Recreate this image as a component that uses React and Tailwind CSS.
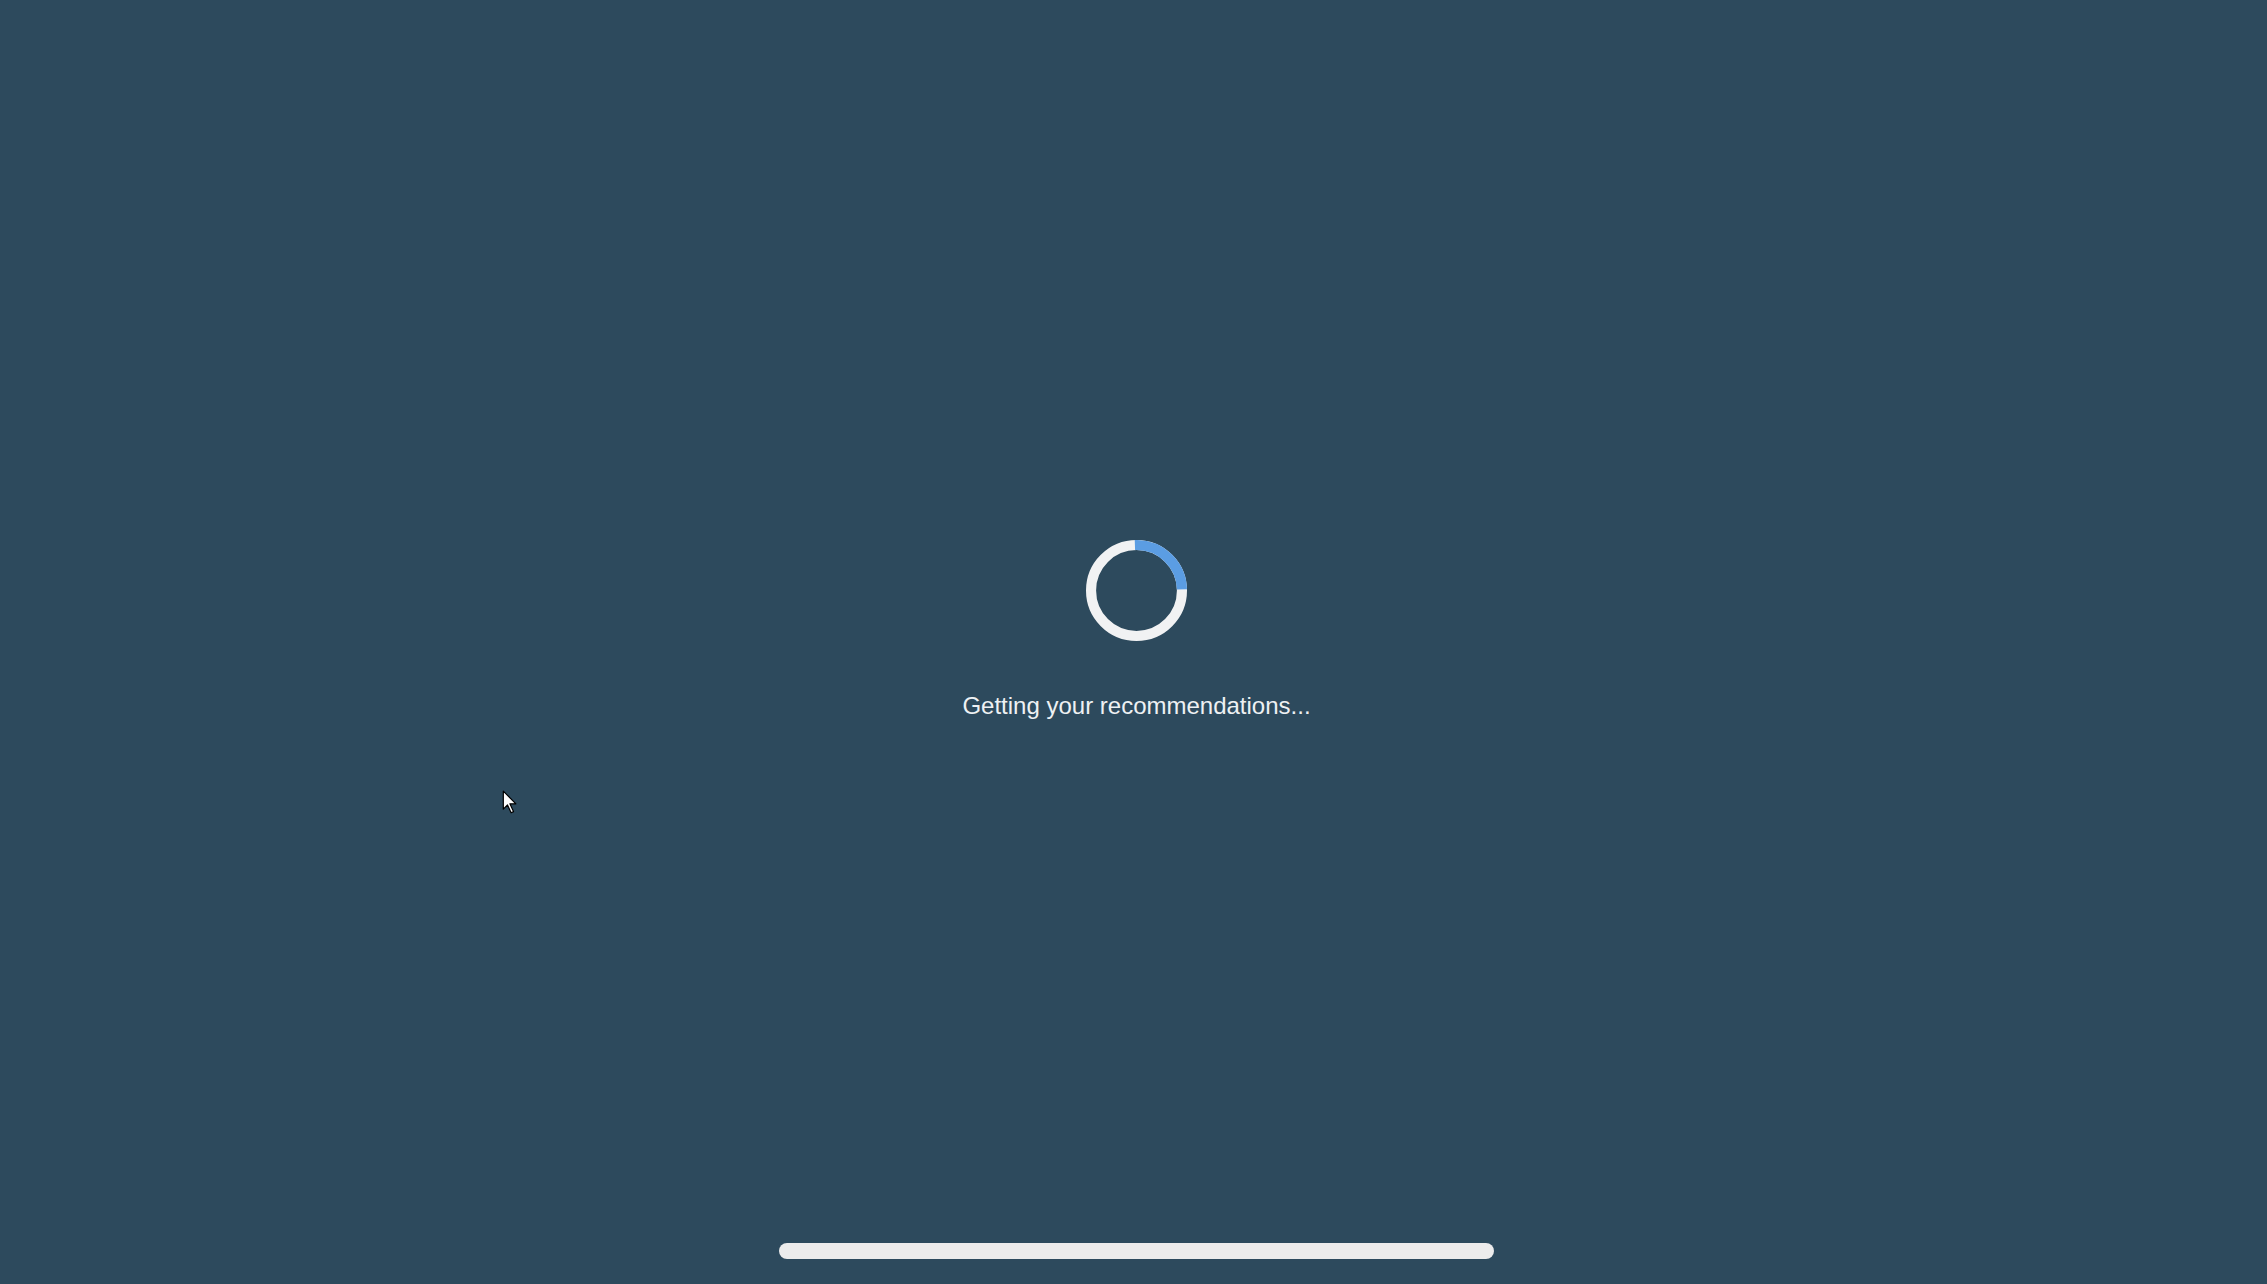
export default function App() {
  return (
    <main
      className="relative flex h-[1284px] w-full flex-col items-center overflow-hidden bg-[#2d4a5d] pl-[6px]"
      style={{ fontFamily: '"Liberation Sans", Arial, sans-serif' }}
    >
      {/* spinner */}
      <div className="mt-[540px] h-[101px] w-[101px]">
        <svg viewBox="0 0 100 100" className="h-full w-full">
          <circle cx="50" cy="50" r="45" fill="none" stroke="#f1f2f3" strokeWidth="10" />
          <circle
            cx="50"
            cy="50"
            r="45"
            fill="none"
            stroke="#5b9de3"
            strokeWidth="10"
            strokeDasharray="71 283"
            transform="rotate(-92 50 50)"
          />
        </svg>
      </div>

      <p className="mt-[51px] text-[24px] leading-[28px] text-[#eef1f3]">Getting your recommendations...</p>

      {/* home indicator */}
      <div className="mt-auto mb-[25px] h-[16px] w-[715px] rounded-full bg-[#ececec]" />

      {/* mouse pointer */}
      <svg className="absolute left-[502px] top-[790px]" width="17" height="24" viewBox="0 0 14 20">
        <path
          d="M1 1 L1 16 L4.5 12.5 L7.5 19 L9.5 18 L6.5 11.5 L11.5 11.5 Z"
          fill="#ffffff"
          stroke="#000000"
          strokeWidth="1"
          strokeLinejoin="round"
        />
      </svg>
    </main>
  );
}
